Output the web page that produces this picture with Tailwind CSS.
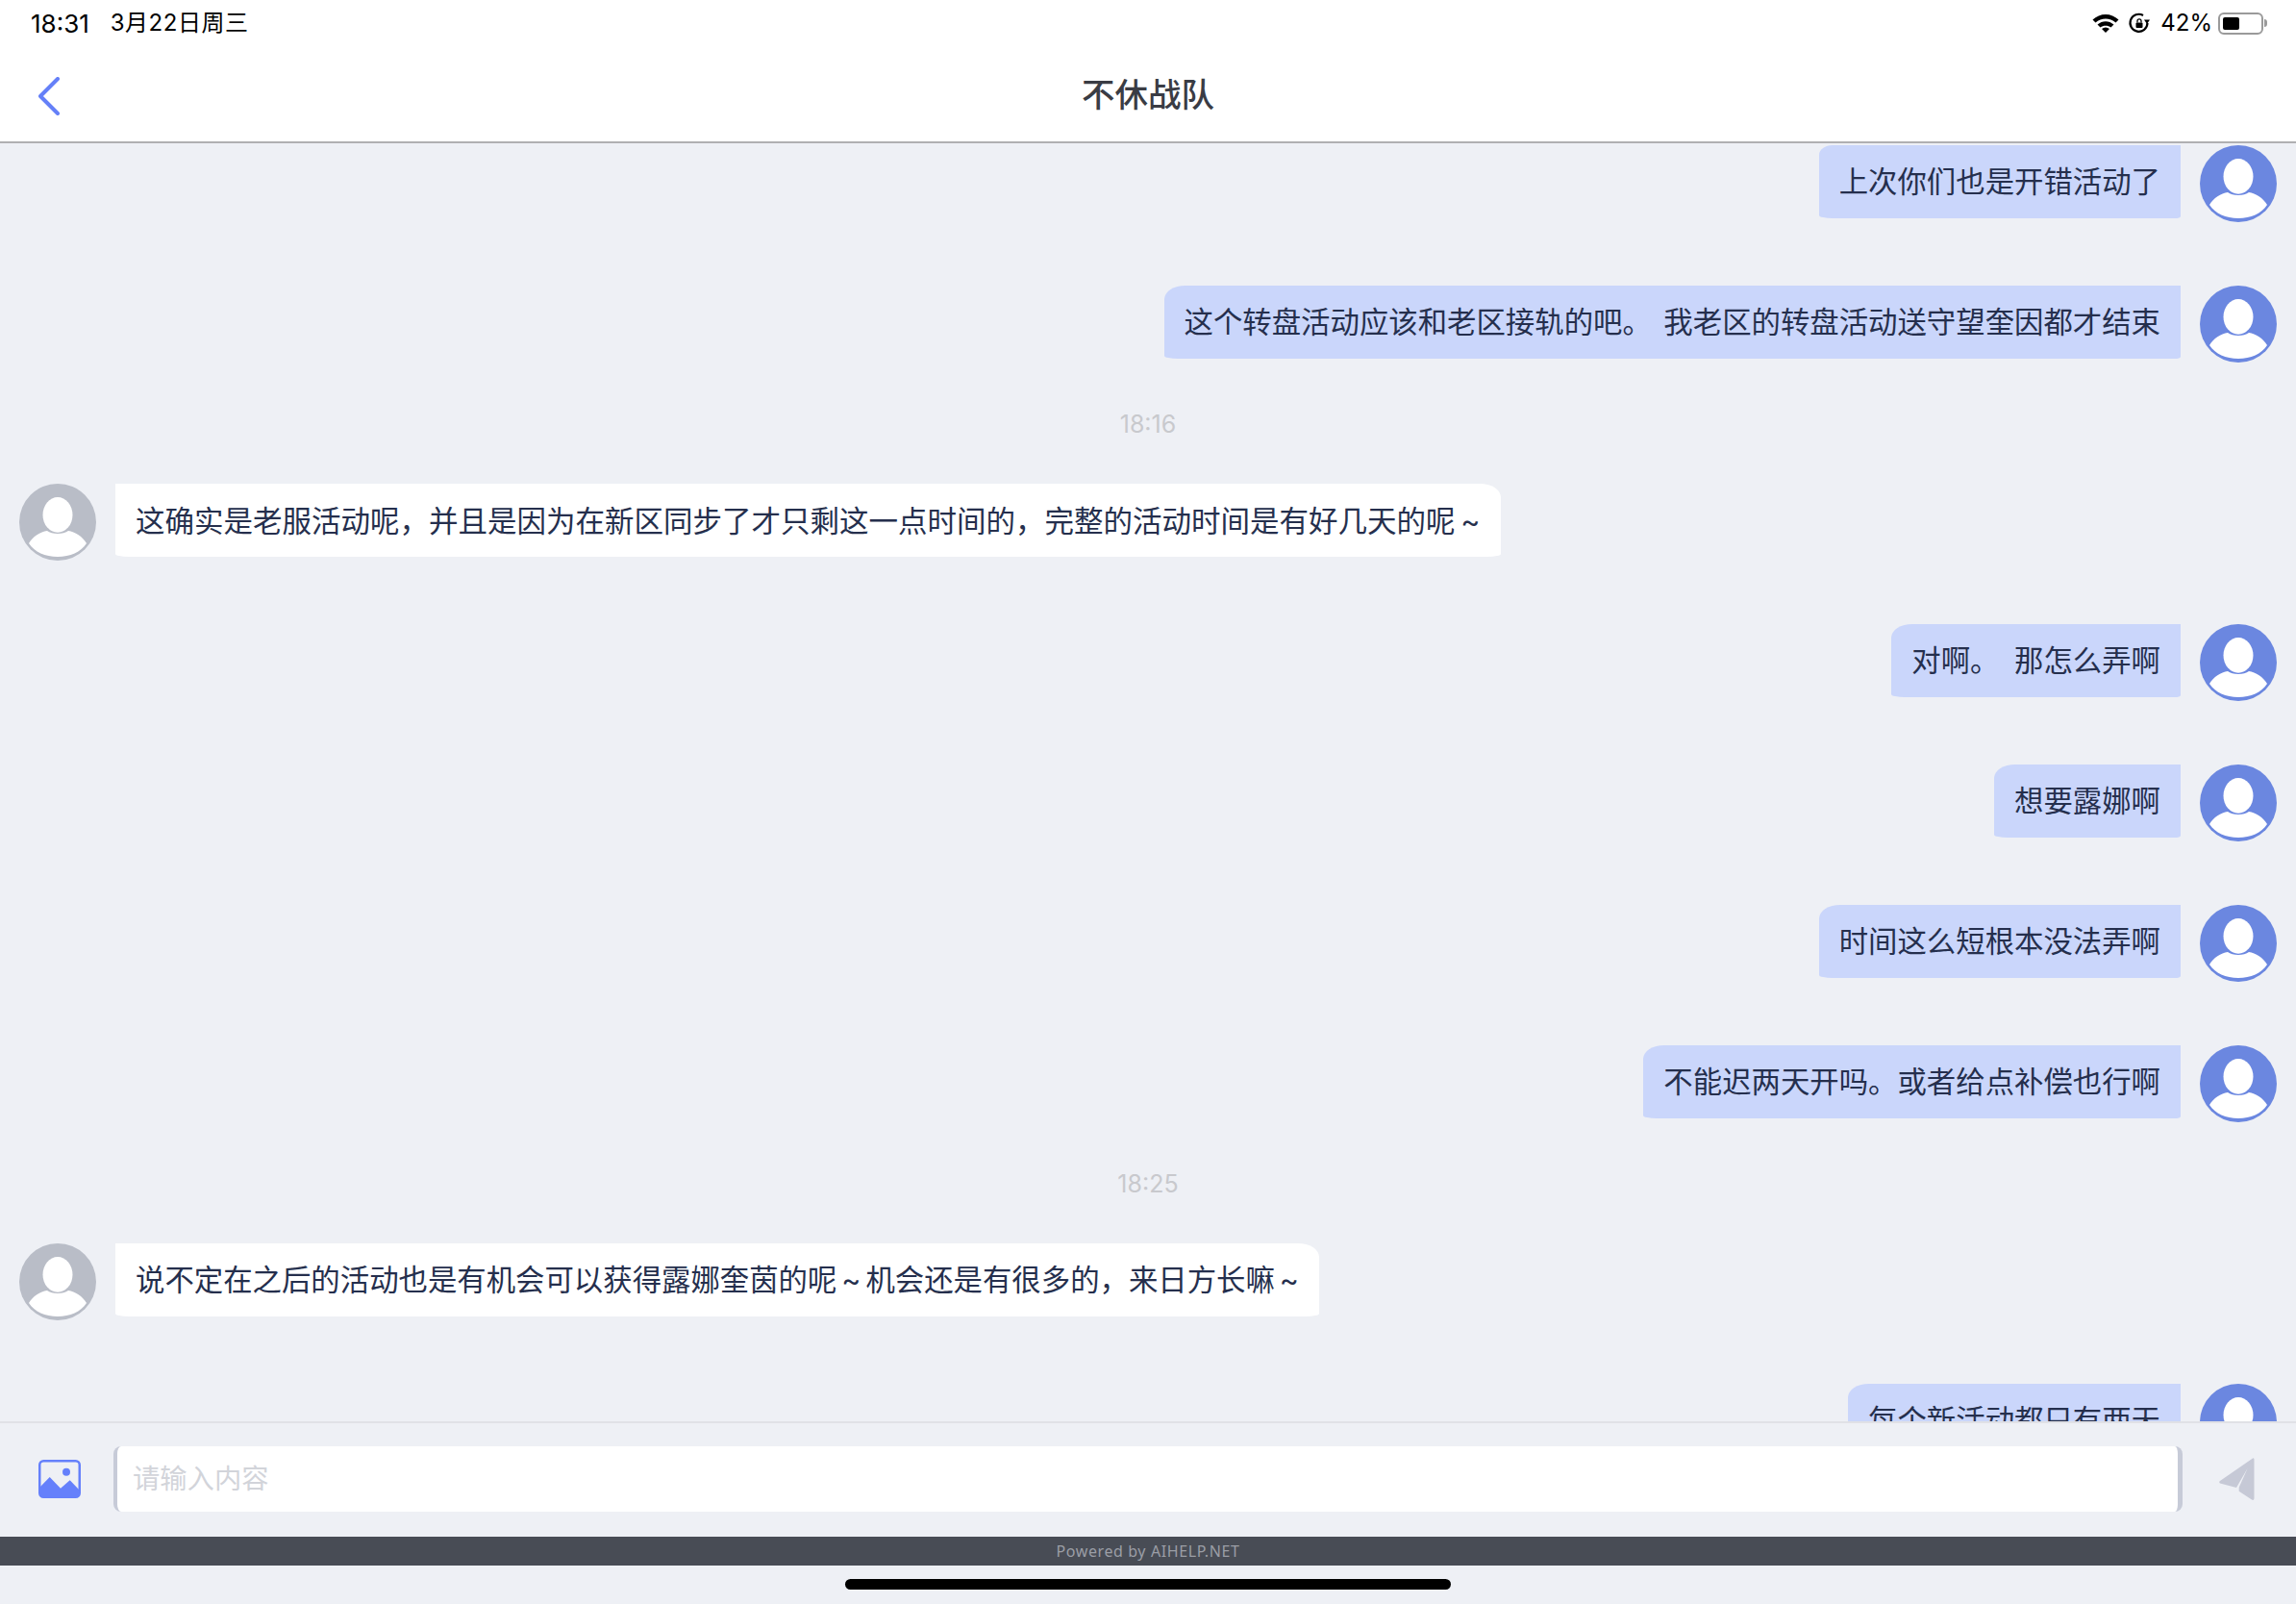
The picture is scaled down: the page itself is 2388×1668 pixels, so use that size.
<!DOCTYPE html>
<html lang="zh-CN">

<head>
    <meta charset="UTF-8">
    <title>不休战队</title>
    <script src="https://cdn.jsdelivr.net/npm/@tailwindcss/browser@4"></script>
</head>

<body class="m-0 bg-[#eef0f5] font-['Inter','Noto_Sans_CJK_SC',sans-serif]">
    <div class="flex flex-col w-[2388px] h-[1668px] overflow-hidden">

        <!-- top bar -->
        <header class="relative h-[149px] shrink-0 bg-white border-b-2 border-[#b0b0b2]">
            <div class="flex items-center justify-between h-[48px] pl-[32px] pr-[30px] text-black">
                <div class="flex items-center gap-[22px]">
                    <span class="text-[26px]">18:31</span>
                    <span class="text-[24px] tracking-[0.5px]">3月22日周三</span>
                </div>
                <div class="flex items-center text-[24px]">
                    <svg class="w-[28px] h-[22px]" viewBox="0 0 28 22">
                        <path d="M0.500 7.500C8 0 20 0 27.500 7.500L24.500 10.500C18.500 5 9.500 5 3.500 10.500Z M5.500 12.500C10.500 8 17.500 8 22.500 12.500L19.500 15.500C16.500 13 11.500 13 8.500 15.500Z M10 17C12.500 15 15.500 15 18 17L14 21Z" fill="#000" />
                    </svg>
                    <svg class="w-[24px] h-[24px] ml-[9px]" viewBox="0 0 24 24" fill="none">
                        <path d="M20.500 12A9 9 0 1 1 16 4" stroke="#000" stroke-width="2.200" />
                        <path d="M17 8.500h6L20 13Z" fill="#000" />
                        <rect x="8.500" y="11.500" width="7" height="5.500" rx="1" fill="#000" />
                        <path d="M10 11.500V9.800a2 2 0 0 1 4 0V11.500" stroke="#000" stroke-width="1.300" />
                    </svg>
                    <span class="ml-[10px]">42%</span>
                    <div class="flex items-center ml-[6px]">
                        <div class="w-[47px] h-[23px] p-[3px] rounded-[6px] border-2 border-[#9a9a9a]">
                            <div class="w-[17px] h-full rounded-[2px] bg-black"></div>
                        </div>
                        <div class="w-[3px] h-[8px] ml-[1px] rounded-r-full bg-[#9a9a9a]"></div>
                    </div>
                </div>
            </div>
            <div class="flex items-center h-[100px] pl-[40px]">
                <svg class="w-[22px] h-[40px] mt-[3px]" viewBox="0 0 22 40" fill="none">
                    <path d="M20 2L2 20L20 38" stroke="#6580f8" stroke-width="4" stroke-linecap="round" stroke-linejoin="round" />
                </svg>
            </div>
            <h1 class="absolute left-0 right-0 top-[71px] text-center text-[34.500px] leading-[56px] font-medium text-[#3a3c44]">不休战队</h1>
        </header>

        <!-- messages -->
        <main class="flex-1 min-h-0 overflow-hidden pt-[2px] px-[20px]">
            <div class="flex justify-end mb-[66px]">
                <div class="h-[76px] px-[21px] pt-[1px] flex items-center bg-[#cad6fb] rounded-tl-[14px_10px] rounded-bl-[14px_3px] rounded-br-[6px_2px] text-[30.400px] text-[#252f4d] whitespace-pre">上次你们也是开错活动了</div>
                <svg class="w-[80px] h-[80px] ml-[20px] shrink-0" viewBox="0 0 80 80">
                    <circle cx="40" cy="40" r="40" fill="#6b87e0" />
                    <ellipse cx="40" cy="32.400" rx="15.500" ry="18.300" fill="#fff" />
                    <path d="M10 62C14 55 22 50 29 49C34 53 46 53 51 49C58 50 66 55 70 62C64 71 53 76 40 76C27 76 16 71 10 62Z" fill="#fff" />
                </svg>
            </div>
            <div class="flex justify-end mb-[66px]">
                <div class="h-[76px] px-[21px] pt-[1px] flex items-center bg-[#cad6fb] rounded-tl-[22px_14px] rounded-bl-[14px_3px] rounded-br-[6px_2px] text-[30.400px] text-[#252f4d] whitespace-pre [word-spacing:4px]">这个转盘活动应该和老区接轨的吧。 我老区的转盘活动送守望奎因都才结束</div>
                <svg class="w-[80px] h-[80px] ml-[20px] shrink-0" viewBox="0 0 80 80">
                    <circle cx="40" cy="40" r="40" fill="#6b87e0" />
                    <ellipse cx="40" cy="32.400" rx="15.500" ry="18.300" fill="#fff" />
                    <path d="M10 62C14 55 22 50 29 49C34 53 46 53 51 49C58 50 66 55 70 62C64 71 53 76 40 76C27 76 16 71 10 62Z" fill="#fff" />
                </svg>
            </div>

            <div class="-mt-[31px] mb-[31px] h-[60px] flex items-center justify-center text-[25px] text-[#c8c9cd]">18:16</div>

            <div class="flex mb-[66px]">
                <svg class="w-[80px] h-[80px] mr-[20px] shrink-0" viewBox="0 0 80 80">
                    <circle cx="40" cy="40" r="40" fill="#b9bdc7" />
                    <ellipse cx="40" cy="32.400" rx="15.500" ry="18.300" fill="#fff" />
                    <path d="M10 62C14 55 22 50 29 49C34 53 46 53 51 49C58 50 66 55 70 62C64 71 53 76 40 76C27 76 16 71 10 62Z" fill="#fff" />
                </svg>
                <div class="h-[76px] px-[21px] pt-[1px] flex items-center bg-white rounded-tr-[22px_14px] rounded-b-[14px_3px] text-[30.500px] text-[#252f4d] whitespace-pre"><span>这确实是老服活动呢，并且是因为在新区同步了才只剩这一点时间的，完整的活动时间是有好几天的呢<span class="inline-block w-[26px] text-right">~</span></span></div>
            </div>

            <div class="flex justify-end mb-[66px]">
                <div class="h-[76px] px-[21px] pt-[1px] flex items-center bg-[#cad6fb] rounded-tl-[22px_14px] rounded-bl-[14px_3px] rounded-br-[6px_2px] text-[30.400px] text-[#252f4d] whitespace-pre [word-spacing:7px]">对啊。 那怎么弄啊</div>
                <svg class="w-[80px] h-[80px] ml-[20px] shrink-0" viewBox="0 0 80 80">
                    <circle cx="40" cy="40" r="40" fill="#6b87e0" />
                    <ellipse cx="40" cy="32.400" rx="15.500" ry="18.300" fill="#fff" />
                    <path d="M10 62C14 55 22 50 29 49C34 53 46 53 51 49C58 50 66 55 70 62C64 71 53 76 40 76C27 76 16 71 10 62Z" fill="#fff" />
                </svg>
            </div>
            <div class="flex justify-end mb-[66px]">
                <div class="h-[76px] px-[21px] pt-[1px] flex items-center bg-[#cad6fb] rounded-tl-[22px_14px] rounded-bl-[14px_3px] rounded-br-[6px_2px] text-[30.400px] text-[#252f4d] whitespace-pre">想要露娜啊</div>
                <svg class="w-[80px] h-[80px] ml-[20px] shrink-0" viewBox="0 0 80 80">
                    <circle cx="40" cy="40" r="40" fill="#6b87e0" />
                    <ellipse cx="40" cy="32.400" rx="15.500" ry="18.300" fill="#fff" />
                    <path d="M10 62C14 55 22 50 29 49C34 53 46 53 51 49C58 50 66 55 70 62C64 71 53 76 40 76C27 76 16 71 10 62Z" fill="#fff" />
                </svg>
            </div>
            <div class="flex justify-end mb-[66px]">
                <div class="h-[76px] px-[21px] pt-[1px] flex items-center bg-[#cad6fb] rounded-tl-[22px_14px] rounded-bl-[14px_3px] rounded-br-[6px_2px] text-[30.400px] text-[#252f4d] whitespace-pre">时间这么短根本没法弄啊</div>
                <svg class="w-[80px] h-[80px] ml-[20px] shrink-0" viewBox="0 0 80 80">
                    <circle cx="40" cy="40" r="40" fill="#6b87e0" />
                    <ellipse cx="40" cy="32.400" rx="15.500" ry="18.300" fill="#fff" />
                    <path d="M10 62C14 55 22 50 29 49C34 53 46 53 51 49C58 50 66 55 70 62C64 71 53 76 40 76C27 76 16 71 10 62Z" fill="#fff" />
                </svg>
            </div>
            <div class="flex justify-end mb-[66px]">
                <div class="h-[76px] px-[21px] pt-[1px] flex items-center bg-[#cad6fb] rounded-tl-[22px_14px] rounded-bl-[14px_3px] rounded-br-[6px_2px] text-[30.400px] text-[#252f4d] whitespace-pre">不能迟两天开吗。或者给点补偿也行啊</div>
                <svg class="w-[80px] h-[80px] ml-[20px] shrink-0" viewBox="0 0 80 80">
                    <circle cx="40" cy="40" r="40" fill="#6b87e0" />
                    <ellipse cx="40" cy="32.400" rx="15.500" ry="18.300" fill="#fff" />
                    <path d="M10 62C14 55 22 50 29 49C34 53 46 53 51 49C58 50 66 55 70 62C64 71 53 76 40 76C27 76 16 71 10 62Z" fill="#fff" />
                </svg>
            </div>

            <div class="-mt-[31px] mb-[31px] h-[60px] flex items-center justify-center text-[25px] text-[#c8c9cd]">18:25</div>

            <div class="flex mb-[66px]">
                <svg class="w-[80px] h-[80px] mr-[20px] shrink-0" viewBox="0 0 80 80">
                    <circle cx="40" cy="40" r="40" fill="#b9bdc7" />
                    <ellipse cx="40" cy="32.400" rx="15.500" ry="18.300" fill="#fff" />
                    <path d="M10 62C14 55 22 50 29 49C34 53 46 53 51 49C58 50 66 55 70 62C64 71 53 76 40 76C27 76 16 71 10 62Z" fill="#fff" />
                </svg>
                <div class="h-[76px] px-[21px] pt-[1px] flex items-center bg-white rounded-tr-[22px_14px] rounded-b-[14px_3px] text-[30.400px] text-[#252f4d] whitespace-pre"><span>说不定在之后的活动也是有机会可以获得露娜奎茵的呢<span class="inline-block w-[30px] text-center">~</span>机会还是有很多的，来日方长嘛<span class="inline-block w-[25px] text-right">~</span></span></div>
            </div>

            <div class="flex justify-end mb-[66px]">
                <div class="h-[76px] px-[21px] pt-[1px] flex items-center bg-[#cad6fb] rounded-tl-[22px_14px] rounded-bl-[14px_3px] rounded-br-[6px_2px] text-[30.400px] text-[#252f4d] whitespace-pre">每个新活动都只有两天</div>
                <svg class="w-[80px] h-[80px] ml-[20px] shrink-0" viewBox="0 0 80 80">
                    <circle cx="40" cy="40" r="40" fill="#6b87e0" />
                    <ellipse cx="40" cy="32.400" rx="15.500" ry="18.300" fill="#fff" />
                    <path d="M10 62C14 55 22 50 29 49C34 53 46 53 51 49C58 50 66 55 70 62C64 71 53 76 40 76C27 76 16 71 10 62Z" fill="#fff" />
                </svg>
            </div>
        </main>

        <!-- input -->
        <div class="flex items-center h-[120px] shrink-0 border-t-2 border-[#e0e1e6] bg-[#eef0f5] pb-[2px]">
            <div class="w-[118px] pl-[40px]">
                <svg class="block w-[44px] h-[40px]" viewBox="0 0 44 40">
                    <rect x="1.250" y="1.250" width="41.500" height="37.500" rx="4" fill="none" stroke="#6580fb" stroke-width="2.500" />
                    <circle cx="29" cy="12.700" r="4" fill="#6580fb" />
                    <path d="M1 29L11.700 18L23 29.700L32.700 21.300L43 32V35A4 4 0 0 1 39 39H5A4 4 0 0 1 1 35Z" fill="#6580fb" />
                </svg>
            </div>
            <div class="flex items-center w-[2152px] h-[68px] pl-[16px] bg-white rounded-[8px] border-l-4 border-r-[5px] border-[#c7cbd8] text-[28.300px] text-[#d2d4da]">请输入内容</div>
            <div class="flex-1 pl-[38px]">
                <svg class="block w-[37px] h-[44px]" viewBox="0 0 37 44">
                    <path d="M35 0.500C36 0 36.500 1 36.500 2V42C36.500 44 35 44.500 34 43.500L20.700 34.700V30.700L29.600 11L18 31L1 26.500C0 26 0 24.500 1 24Z" fill="#c6c9d6" />
                </svg>
            </div>
        </div>

        <!-- footer -->
        <div class="flex items-center justify-center h-[30px] shrink-0 bg-[#484c55] text-[16px] tracking-[0.6px] text-[#9b9ea6] font-['Noto_Sans',sans-serif]">Powered by AIHELP.NET</div>
        <div class="flex justify-center h-[40px] shrink-0 pt-[14px]">
            <div class="w-[630px] h-[11px] rounded-full bg-black"></div>
        </div>
    </div>
</body>

</html>
